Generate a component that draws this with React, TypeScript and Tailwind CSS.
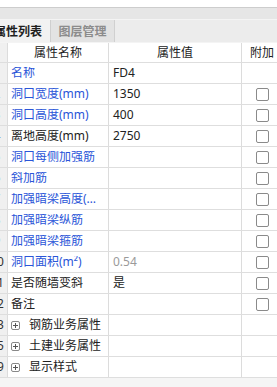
import React from 'react';

type Row = {
  no: string;
  name: string;
  value?: string;
  blue?: boolean;
  gray?: boolean;
  check?: boolean;
  group?: boolean;
};

const rows: Row[] = [
  { no: '1', name: '名称', value: 'FD4', blue: true },
  { no: '2', name: '洞口宽度(mm)', value: '1350', blue: true, check: true },
  { no: '3', name: '洞口高度(mm)', value: '400', blue: true, check: true },
  { no: '4', name: '离地高度(mm)', value: '2750', check: true },
  { no: '5', name: '洞口每侧加强筋', blue: true, check: true },
  { no: '6', name: '斜加筋', blue: true, check: true },
  { no: '7', name: '加强暗梁高度(mm)', blue: true, check: true },
  { no: '8', name: '加强暗梁纵筋', blue: true, check: true },
  { no: '9', name: '加强暗梁箍筋', blue: true, check: true },
  { no: '10', name: '洞口面积(m²)', value: '0.54', blue: true, gray: true, check: true },
  { no: '11', name: '是否随墙变斜', value: '是', check: true },
  { no: '12', name: '备注', check: true },
  { no: '13', name: '钢筋业务属性', group: true },
  { no: '25', name: '土建业务属性', group: true },
  { no: '39', name: '显示样式', group: true },
];

function Checkbox() {
  return <div className="w-[13px] h-[13px] rounded-[2px] border border-[#8a8a8a] bg-white" />;
}

function NoCell({ no }: { no?: string }) {
  return (
    <div className="w-[8px] shrink-0 overflow-hidden bg-[#f0f0f0] border-r border-[#dcdcdc] flex items-center">
      <div className="w-[22px] shrink-0 ml-[-14px] text-center text-[#333]">{no}</div>
    </div>
  );
}

export default function App() {
  return (
    <div className="w-[277px] h-[387px] overflow-hidden bg-[#f5f5f5] text-[12px] font-['Noto_Sans','Noto_Sans_CJK_SC',sans-serif] leading-none">
      {/* top bars */}
      <div className="h-[7px] bg-white" />
      <div className="h-[1px] bg-[#cdcdcd]" />
      <div className="h-[11px] bg-[#e6e6e6]" />

      {/* tabs */}
      <div className="h-[24px] flex bg-[#ececec] border-t border-[#f4f4f4] border-b border-[#d2d2d2] overflow-hidden">
        <div className="w-[65px] shrink-0 ml-[-14px] flex items-center justify-center bg-[#f2f2f2] border-r border-[#cfcfcf] font-bold text-[#1f1f1f] font-['Noto_Sans_CJK_SC',sans-serif]">
          属性列表
        </div>
        <div className="w-[64px] shrink-0 flex items-center justify-center bg-[#e3e3e3] border-r border-[#d0d0d0] font-bold text-[#8c8c8c] font-['Noto_Sans_CJK_SC',sans-serif]">
          图层管理
        </div>
      </div>

      {/* table */}
      <div className="bg-white">
        <div className="h-[20px] flex border-b border-[#dedede] text-[#222]">
          <NoCell />
          <div className="w-[101px] shrink-0 border-r border-[#dcdcdc] flex items-center justify-center">属性名称</div>
          <div className="w-[133px] shrink-0 border-r border-[#dcdcdc] flex items-center justify-center">属性值</div>
          <div className="w-[40px] shrink-0 flex items-center justify-center">附加</div>
        </div>
        {rows.map((r) => (
          <div key={r.no} className="h-[21px] flex border-b border-[#dedede]">
            <NoCell no={r.no} />
            <div
              className={
                'w-[101px] shrink-0 border-r border-[#dcdcdc] flex items-center pl-[3px] pr-[3px] overflow-hidden ' +
                (r.blue ? 'text-[#2a55d8]' : 'text-[#222]')
              }
            >
              {r.group ? (
                <>
                  <div className="w-[9px] h-[9px] shrink-0 ml-[0px] rounded-[2px] border border-[#888] flex items-center justify-center relative">
                    <div className="w-[5px] h-[1px] bg-[#555]" />
                    <div className="absolute w-[1px] h-[5px] bg-[#555]" />
                  </div>
                  <span className="ml-[9px] text-[#222] whitespace-nowrap">{r.name}</span>
                </>
              ) : (
                <span className="truncate whitespace-nowrap">{r.name}</span>
              )}
            </div>
            <div
              className={
                'w-[133px] shrink-0 border-r border-[#dcdcdc] flex items-center pl-[4px] ' +
                (r.gray ? 'text-[#9a9a9a]' : 'text-[#222]')
              }
            >
              {r.value}
            </div>
            <div className="w-[40px] shrink-0 flex items-center justify-center">{r.check && <Checkbox />}</div>
          </div>
        ))}
      </div>
    </div>
  );
}
